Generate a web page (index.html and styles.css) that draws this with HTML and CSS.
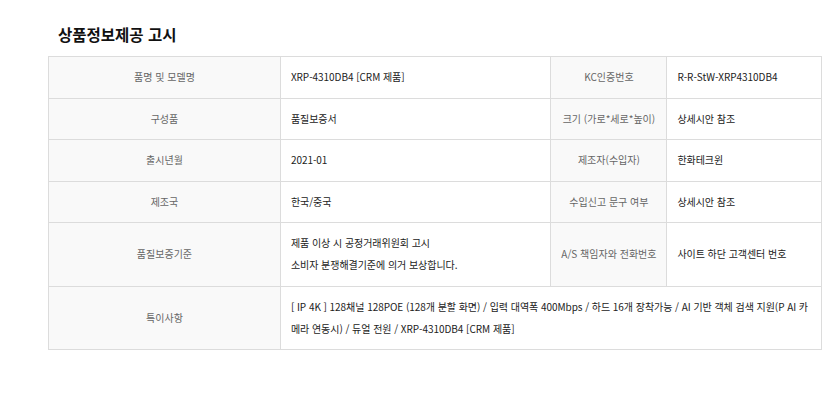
FILE: index.html
```html
<!DOCTYPE html>
<html lang="ko">
<head>
<meta charset="utf-8">
<title>상품정보제공 고시</title>
<link rel="stylesheet" href="styles.css">
</head>
<body>
<div class="notice">
  <h2 class="notice-title">상품정보제공 고시</h2>
  <table class="info-table">
    <colgroup>
      <col class="c1"><col class="c2"><col class="c3"><col class="c4">
    </colgroup>
    <tbody>
      <tr>
        <th>품명 및 모델명</th>
        <td>XRP-4310DB4 [CRM 제품]</td>
        <th>KC인증번호</th>
        <td>R-R-StW-XRP4310DB4</td>
      </tr>
      <tr>
        <th>구성품</th>
        <td>품질보증서</td>
        <th>크기 (가로*세로*높이)</th>
        <td>상세시안 참조</td>
      </tr>
      <tr>
        <th>출시년월</th>
        <td>2021-01</td>
        <th>제조자(수입자)</th>
        <td>한화테크윈</td>
      </tr>
      <tr>
        <th>제조국</th>
        <td>한국/중국</td>
        <th>수입신고 문구 여부</th>
        <td>상세시안 참조</td>
      </tr>
      <tr>
        <th>품질보증기준</th>
        <td>제품 이상 시 공정거래위원회 고시<br>소비자 분쟁해결기준에 의거 보상합니다.</td>
        <th>A/S 책임자와 전화번호</th>
        <td>사이트 하단 고객센터 번호</td>
      </tr>
      <tr>
        <th>특이사항</th>
        <td colspan="3">[ IP 4K ] 128채널 128POE (128개 분할 화면) / 입력 대역폭 400Mbps / 하드 16개 장착가능 / AI 기반 객체 검색 지원(P AI 카메라 연동시) / 듀얼 전원 / XRP-4310DB4 [CRM 제품]</td>
      </tr>
    </tbody>
  </table>
</div>
</body>
</html>
```

FILE: styles.css
```css
html, body {
  margin: 0;
  padding: 0;
  background: #fff;
}

body {
  font-family: "Noto Sans CJK KR", "Noto Sans", sans-serif;
  color: #222;
}

.notice {
  padding: 23px 0 0 48px;
}

.notice-title {
  margin: 0 0 11px 10px;
  font-size: 15.5px;
  line-height: 22px;
  font-weight: 700;
  color: #111;
}

.info-table {
  width: 774px;
  border-collapse: collapse;
  table-layout: fixed;
  font-size: 10px;
}

.c1 { width: 30%; }
.c2 { width: 35%; }
.c3 { width: 15%; }
.c4 { width: 20%; }

.info-table th,
.info-table td {
  border: 1px solid #dcdcdc;
  padding: 9.25px 10px;
  line-height: 22px;
  vertical-align: middle;
}

.info-table th {
  padding-left: 3px;
  padding-right: 3px;
  background: #f9f9f9;
  color: #666;
  font-weight: 400;
  text-align: center;
  white-space: nowrap;
}

.info-table td {
  color: #222;
  text-align: left;
  letter-spacing: -0.05px;
}
```
